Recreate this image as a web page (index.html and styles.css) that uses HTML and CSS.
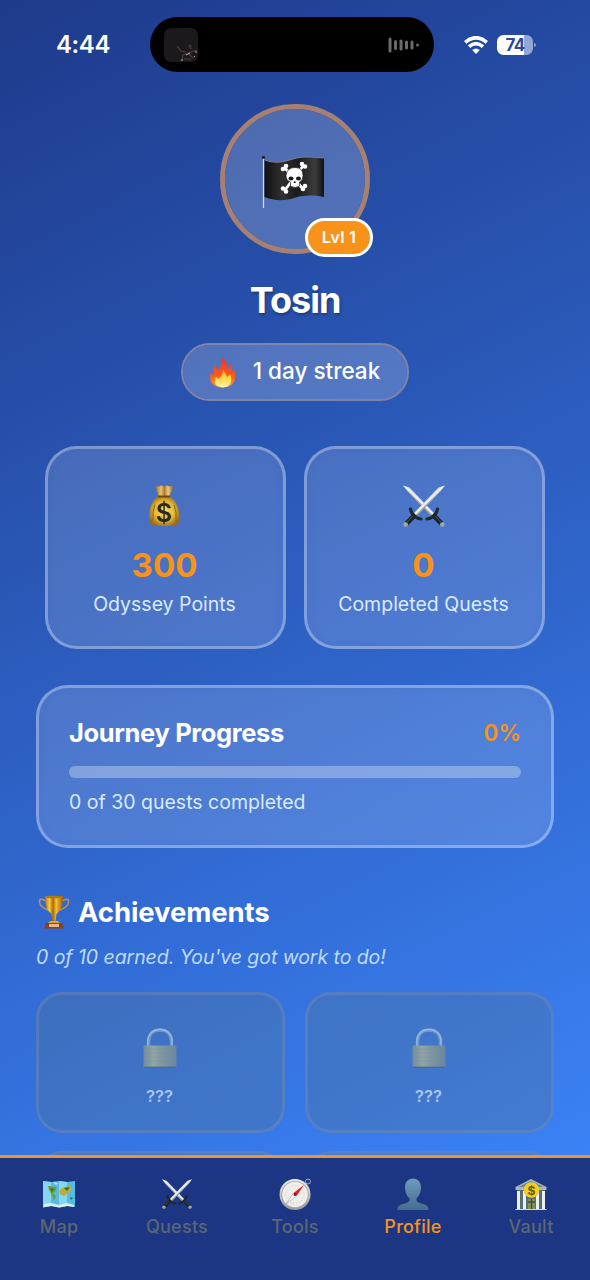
FILE: index.html
```html
<!DOCTYPE html>
<html lang="en">
<head>
<meta charset="utf-8">
<title>Profile</title>
<link rel="stylesheet" href="styles.css">
</head>
<body>
<svg class="defs" aria-hidden="true">
  <defs>
    <linearGradient id="bladeL" x1="0" y1="1" x2="1" y2="0"><stop offset=".46" stop-color="#8d949c"/><stop offset=".5" stop-color="#fff"/><stop offset=".56" stop-color="#cfd6dc"/></linearGradient>
    <linearGradient id="gold" x1="0" x2="1"><stop offset="0" stop-color="#b87512"/><stop offset=".25" stop-color="#f5c93c"/><stop offset=".45" stop-color="#a8690c"/><stop offset=".62" stop-color="#f3c035"/><stop offset="1" stop-color="#a35d08"/></linearGradient>
    <linearGradient id="sack" x1="0" x2="1"><stop offset="0" stop-color="#9c6c26"/><stop offset=".3" stop-color="#e8c070"/><stop offset=".5" stop-color="#b07a35"/><stop offset=".7" stop-color="#efcb80"/><stop offset="1" stop-color="#936022"/></linearGradient>
    <radialGradient id="bag" cx=".5" cy=".5" r=".55"><stop offset="0" stop-color="#ffe263"/><stop offset=".6" stop-color="#e5b634"/><stop offset="1" stop-color="#96691a"/></radialGradient>
    <linearGradient id="cloth" x1="0" x2="1"><stop offset="0" stop-color="#111"/><stop offset=".3" stop-color="#303030"/><stop offset=".55" stop-color="#1b1b1b"/><stop offset=".85" stop-color="#3c3c3c"/><stop offset="1" stop-color="#111"/></linearGradient>
    <linearGradient id="flame" x1="0" y1="0" x2="0" y2="1"><stop offset="0" stop-color="#e8352a"/><stop offset=".6" stop-color="#fa5a1e"/><stop offset="1" stop-color="#ff9d22"/></linearGradient>
    <linearGradient id="core" x1="0" y1="0" x2="0" y2="1"><stop offset="0" stop-color="#ff9b28"/><stop offset=".45" stop-color="#ffd23c"/><stop offset="1" stop-color="#fff6ae"/></linearGradient>
    <linearGradient id="lockBody" x1="0" x2="1"><stop offset="0" stop-color="#718d9d"/><stop offset=".3" stop-color="#91a5a6"/><stop offset=".5" stop-color="#829aa1"/><stop offset=".75" stop-color="#7690a0"/><stop offset="1" stop-color="#6886a6"/></linearGradient>
    <linearGradient id="person" x1="0" y1="0" x2="0" y2="1"><stop offset="0" stop-color="#6d9bbb"/><stop offset="1" stop-color="#456d90"/></linearGradient>
    <linearGradient id="rim" x1="0" y1="0" x2="0" y2="1"><stop offset="0" stop-color="#eee"/><stop offset="1" stop-color="#999"/></linearGradient>
    <symbol id="swords" viewBox="0 0 42 42">
      <g id="sword">
        <path d="M0 .5 6.500 2.500 31 28 28 31 4.500 6.500Z" fill="url(#bladeL)"/>
        <path d="M0 .5 29.500 29.500 28 31 4.500 6.500Z" fill="#868f97" opacity=".55"/>
        <path d="M24 34Q27 34 30.500 31T34.500 24" fill="none" stroke="#1d2b2e" stroke-width="3.200" stroke-linecap="round"/>
        <path d="M30 30 38.500 38.500" stroke="#1d2628" stroke-width="4.800"/>
        <path d="M32 31 38 37" stroke="#56605e" stroke-width=".8"/>
        <circle cx="39.300" cy="39.500" r="2.300" fill="#a3aa9e"/>
      </g>
      <use href="#sword" transform="matrix(-1 0 0 1 42 0)"/>
    </symbol>
    <symbol id="lock" viewBox="0 0 34 41">
      <path d="M5.500 20V13.500C5.500 6 10 2 17 2S28.500 6 28.500 13.500V20" fill="none" stroke="#6f96ca" stroke-width="3.500"/>
      <path d="M4.800 20V13.500C4.800 6 10 1.500 17 1.500S29 6 29 13.500V20" fill="none" stroke="#9ab9dc" stroke-width="1.300"/>
      <rect x=".5" y="17.500" width="33" height="22.500" rx="1" fill="url(#lockBody)"/>
      <path d="M1 21H33M1 25H33M1 29H33M1 33H33" stroke="#7394a0" stroke-width=".6" opacity=".5"/>
      <path d="M1 39.300H33" stroke="#4b6780" stroke-width="1.200"/>
    </symbol>
  </defs>
</svg>
<div class="phone">
  <main class="screen">
    <header class="status">
      <span class="status-time">4:44</span>
      <div class="island">
        <svg class="album" viewBox="0 0 34 34"><rect width="34" height="34" rx="7" fill="#1b191b"/><path d="M13 18 17 23 22 24M26 18 27 21M18 33 19 27 24 25 33 22M24 25 29 30M20 31H27" fill="none" stroke="#4d403d" stroke-width="1.200"/><path d="m22 27 4-2M18 31v2M30 29l1-1M32 23v2" stroke="#c4b0a7" stroke-width="1"/><circle cx="26" cy="18" r="1.700" fill="#3e3434"/></svg>
        <svg class="wave" viewBox="0 0 32 16"><g stroke="#6b6b6d" stroke-width="3" stroke-linecap="round"><path d="M2 2V14M7.500 4.500V11.500M13 4V12M18.500 5V11M24 5V11M29.500 8V8.010"/></g></svg>
      </div>
      <div class="status-right">
        <svg class="wifi" viewBox="0 0 24 18"><g fill="none" stroke="#fff" stroke-width="3.700"><path d="M1.200 6.300Q12-2.800 22.800 6.300"/><path d="M5 10.700Q12 4.700 19 10.700"/></g><path d="M8.200 14Q12 10.800 15.800 14L12 17.900Z" fill="#fff"/></svg>
        <div class="battery"><span class="battery-level">74</span></div>
        <svg class="battery-tip" viewBox="0 0 3 6"><path d="M0 0Q3 1 3 3T0 6Z" fill="#8fa4d2"/></svg>
      </div>
    </header>

    <section class="profile">
      <div class="avatar">
        <svg class="flag" viewBox="0 0 64 54">
          <path d="M2.500 1V53" stroke="#d6dbe2" stroke-width="1.300"/><circle cx="2.500" cy="2.300" r="1.600" fill="#1c1c26"/>
          <path d="M3.500 5C15 9 22 7 32 4S50 2 63 3V42C52 40 43 40 33 43S14 46 3.500 42Z" fill="url(#cloth)"/>
          <path d="M3.500 5C15 9 22 7 32 4S50 2 63 3" fill="none" stroke="#80838c" stroke-width=".9"/>
          <g stroke="#fff" stroke-width="2.800" stroke-linecap="round"><path d="M24 13 42 34M42 11 24 35"/></g>
          <g fill="#fff"><circle cx="22" cy="14" r="2.300"/><circle cx="25" cy="11" r="2.300"/><circle cx="41" cy="9" r="2.300"/><circle cx="44" cy="11.500" r="2.300"/><circle cx="22" cy="33.500" r="2.300"/><circle cx="25" cy="36.500" r="2.300"/><circle cx="44" cy="31" r="2.300"/><circle cx="42" cy="34" r="2.300"/></g>
          <path d="M25 20.500Q26 12.500 34 12.500T42 20.500Q42 25.500 38.500 27V31Q34 34 29.500 31V27Q25 25.500 25 20.500Z" fill="#fff" stroke="#252525" stroke-width=".7"/>
          <ellipse cx="30" cy="23.500" rx="2.500" ry="2.100" fill="#191919"/><ellipse cx="37.500" cy="23.500" rx="2.500" ry="2.100" fill="#191919"/><path d="m32.500 28 1.300-2.500L35 28Z" fill="#222"/>
        </svg>
        <span class="level">Lvl 1</span>
      </div>
      <h1 class="name">Tosin</h1>
      <div class="streak">
        <svg class="fire" viewBox="0 0 26 31"><path d="M11.500 0C17 5 18 9 17.500 13 20 11 20 8 20 6.500 22 9 22 12 22.500 15L24.500 13C26 21 26 30 13 30.500 0 30-1 22 .8 15.500L4 19C3 14 3 11 5 7.500 6 10 6 11 8 12.500 12 9 12 4 11.500 0Z" fill="url(#flame)"/><path d="M13 12C15 16 16 17 17.500 20L20 17C23 24 21 30 13 30.500 5 30 3 25 6 19.500L8.500 22C12 19 13 16 13 12Z" fill="url(#core)"/></svg>
        <span>1 day streak</span>
      </div>
    </section>

    <section class="stats">
      <div class="card stat">
        <svg class="stat-icon" viewBox="0 0 42 42"><path d="M11.500 1Q15 2 17 .5 20 2 23 .5 26 2 29.500 1L25.500 11H14.500Z" fill="url(#sack)"/><path d="M14.500 11H25.500Q35.500 18 35.500 33 35.500 41 28 41H12.500Q5 41 5 34 4.500 18 14.500 11Z" fill="url(#bag)"/><path d="M14 11.500H26" stroke="#754914" stroke-width="2"/><path d="M11 20Q8 27 9 36M30 20Q33 28 32 37" fill="none" stroke="#93691b" stroke-width="1"/><text class="bag-sign" x="20" y="36.500">$</text></svg>
        <strong class="stat-value">300</strong>
        <span class="stat-label">Odyssey Points</span>
      </div>
      <div class="card stat">
        <svg class="stat-icon"><use href="#swords"/></svg>
        <strong class="stat-value">0</strong>
        <span class="stat-label">Completed Quests</span>
      </div>
    </section>

    <section class="card progress">
      <div class="progress-head"><h2 class="progress-title">Journey Progress</h2><span class="percent">0%</span></div>
      <div class="track"></div>
      <p class="progress-note">0 of 30 quests completed</p>
    </section>

    <section class="achievements">
      <div class="section-title">
        <svg class="trophy" viewBox="0 0 34 34"><g fill="none" stroke="#c3924b" stroke-width="1.500"><path d="M9 6Q2 2 2.500 7 3 12 11 15M25 6Q32 2 31.500 7 31 12 23 15"/></g><path d="M8 1.500H26Q26 15 19.500 19L18.500 26H15.500L14.500 19Q8 15 8 1.500Z" fill="url(#gold)"/><ellipse cx="17" cy="2" rx="9" ry="1.300" fill="#b37a14"/><path d="M13 26H21L23 28H11Z" fill="#e4a624"/><path d="M9 28H25L27 33.500H7Z" fill="#8d3f19"/><rect x="12" y="29" width="10" height="3" fill="#e7b886"/></svg>
        <h2 class="title-text">Achievements</h2>
      </div>
      <p class="earned">0 of 10 earned. You've got work to do!</p>
      <div class="badges">
        <div class="badge"><svg class="lock"><use href="#lock"/></svg><span>???</span></div>
        <div class="badge"><svg class="lock"><use href="#lock"/></svg><span>???</span></div>
        <div class="badge"></div>
        <div class="badge"></div>
      </div>
    </section>
  </main>

  <nav class="tabs">
    <a class="tab"><svg class="tab-icon" viewBox="0 0 34 34"><path d="M1 4 9 5 17 4 25 5 33 4V30L25 29 17 30.500 9 29 1 30.500Z" fill="#55bde5"/><path d="M1 4 9 5V29L1 30.500ZM17 4 25 5V29L17 30.500Z" fill="#87d6ef"/><path d="M2 27 9 26 17 28 25 26 32 28V30L25 29 17 30.500 9 29 1.500 30Z" fill="#d9eff1"/><path d="M6 9 15 10 13 15 11 16 14 19 12 24 10 18 7 13Z" fill="#6f9c35"/><path d="M18 13 22 10 30 9 29 13 25 17 23 18 22 19 19 18 17 15Z" fill="#c1ac32"/><path d="M8 11 12 12 10 15M22 11 28 10 25 14M28 20 31 21 29 23Z" fill="#326d38"/><path d="M11 5 16 6 14 8Z" fill="#e2d9df"/></svg><span>Map</span></a>
    <a class="tab"><svg class="tab-icon swords-small"><use href="#swords"/></svg><span>Quests</span></a>
    <a class="tab"><svg class="tab-icon" viewBox="0 0 34 34"><circle cx="30" cy="4.500" r="2.500" fill="none" stroke="#9aa9c8" stroke-width="1"/><circle cx="17" cy="17.500" r="15.500" fill="url(#rim)"/><circle cx="17" cy="17.500" r="13.600" fill="#a5a4a4"/><circle cx="17" cy="17.500" r="12.800" fill="#f0eeeb"/><circle cx="17" cy="17.500" r="9" fill="none" stroke="#cbc8c5" stroke-width="1" stroke-dasharray="1 2"/><path d="M26 8 18.500 19 15.500 16Z" fill="#df2029"/><path d="M8 27 15.500 16 18.500 19Z" fill="#fff" stroke="#999" stroke-width=".6"/><circle cx="17" cy="17.500" r="1.500" fill="#851a20"/></svg><span>Tools</span></a>
    <a class="tab active"><svg class="tab-icon" viewBox="0 0 34 34"><path d="M17 1.500C22 1.500 25 5 25 10.500 25 15.500 23 19 20.500 21.500 20 25 22 25.500 27 27 31 28 32.500 29.500 32.500 33H1.500C1.500 29.500 3 28 7 27 12 25.500 14 25 13.500 21.500 11 19 9 15.500 9 10.500 9 5 12 1.500 17 1.500Z" fill="url(#person)"/></svg><span>Profile</span></a>
    <a class="tab"><svg class="tab-icon" viewBox="0 0 34 34"><path d="M3 11H31V33H3Z" fill="#587073"/><path d="M1.500 10 17 2 32.500 10V13H1.500Z" fill="#a9b5b8"/><path d="M4 10 17 4 30 10Z" fill="#71858a"/><g fill="#edf1ed"><path d="M3 14H6V32H3ZM9 14H12V32H9ZM22 14H25V32H22ZM28 14H31V32H28Z"/></g><path d="M14 22H21V32H14Z" fill="#879251"/><path d="M17.500 22V32M14 25H21" stroke="#385046" stroke-width="1.300"/><path d="M1.500 32.500H32.500" stroke="#cdd6d1" stroke-width="1"/><circle cx="17.500" cy="13" r="7.800" fill="#f2cd22"/><text class="bank-sign" x="17.500" y="17.500">$</text></svg><span>Vault</span></a>
  </nav>
</div>
</body>
</html>
```
FILE: styles.css
```css
* { box-sizing: border-box; }
body { margin: 0; font-family: Inter, "Liberation Sans", sans-serif; color: #fff; }
h1, h2, p { margin: 0; }
svg { display: block; flex: none; }
.defs { position: absolute; width: 0; height: 0; }
.phone { display: flex; flex-direction: column; width: 590px; height: 1280px; overflow: hidden; background: #1c3684; }
.screen { flex: 1; min-height: 0; overflow: hidden; background: linear-gradient(153deg, #1e3a8a 0%, #3b82f6 100%); }

.status { display: grid; grid-template-columns: 150px 284px 1fr; align-items: center; height: 90px; padding: 17px 0 18px; }
.status-time { padding-left: 56px; font-size: 24px; font-weight: 600; line-height: 55px; letter-spacing: -.4px; }
.island { display: flex; align-items: center; justify-content: space-between; height: 55px; padding: 0 14px; border-radius: 28px; background: #000; }
.album { width: 34px; height: 34px; }
.wave { width: 32px; height: 16px; }
.status-right { display: flex; align-items: center; padding-left: 30px; }
.wifi { width: 24px; height: 18px; }
.battery { width: 36px; height: 20px; margin-left: 9px; border-radius: 6.500px; background: linear-gradient(90deg, #fff 75%, #93a6d4 75%); }
.battery-level { display: block; text-align: center; font-size: 17px; font-weight: 700; line-height: 20px; letter-spacing: -.8px; color: #2849a0; }
.battery-tip { width: 2px; height: 6px; margin-left: 1px; }

.profile { display: flex; flex-direction: column; align-items: center; padding-top: 14px; }
.avatar { position: relative; display: flex; align-items: center; justify-content: center; width: 150px; height: 150px; border: 5px solid #a68073; border-radius: 50%; background: rgba(255, 255, 255, .2); background-clip: padding-box; }
.flag { width: 64px; height: 54px; margin-top: 6px; margin-right: 4px; }
.level { position: absolute; right: -8px; bottom: -8px; width: 68px; height: 39px; border: 3px solid #fff; border-radius: 20px; background: #f7931a; text-align: center; font-size: 16.500px; font-weight: 600; line-height: 33px; letter-spacing: .2px; }
.name { margin-top: 24px; font-size: 36px; font-weight: 700; line-height: 44px; letter-spacing: -1px; text-shadow: 1px 2px 3px rgba(0, 0, 0, .3); }
.streak { display: flex; align-items: center; justify-content: center; gap: 17px; width: 228px; height: 58px; margin-top: 21px; border: 2px solid #8084aa; border-radius: 29px; background: rgba(255, 255, 255, .2); background-clip: padding-box; font-size: 22.500px; font-weight: 500; line-height: 28px; }
.streak span { padding-bottom: 2px; }
.fire { width: 26px; height: 31px; }

.card { border: 3px solid rgba(255, 255, 255, .3); border-radius: 32px; background: rgba(255, 255, 255, .15); box-shadow: inset 0 0 8px rgba(30, 70, 170, .07); }
.stats { display: grid; grid-template-columns: 1fr 1fr; gap: 18px; margin: 45px 45px 0; }
.stat { display: flex; flex-direction: column; align-items: center; height: 203px; padding: 36px 2px 0 0; }
.stat-icon { width: 42px; height: 42px; }
.stat-value { margin-top: 18px; font-size: 33px; font-weight: 700; line-height: 40px; color: #f7931a; }
.stat-label { margin-top: 6px; font-size: 19.500px; line-height: 26px; color: #dbeafe; }
.bag-sign { font: 600 25px Inter, sans-serif; text-anchor: middle; fill: #30281d; }

.progress { height: 163px; margin: 36px 36px 0; padding: 28px 30px 0; }
.progress-head { display: flex; align-items: center; justify-content: space-between; height: 32px; }
.progress-title { font-size: 25.500px; font-weight: 700; letter-spacing: -.35px; }
.percent { font-size: 22.500px; font-weight: 600; }
.percent { color: #f7931a; }
.track { height: 12px; margin-top: 18px; border-radius: 6px; background: rgba(255, 255, 255, .3); }
.progress-note { margin-top: 11px; font-size: 19.500px; line-height: 26px; color: #dbeafe; }

.achievements { padding: 46px 36px 0; }
.section-title { display: flex; align-items: center; gap: 8px; height: 36px; }
.trophy { width: 34px; height: 34px; margin-left: 1px; margin-right: -1px; }
.title-text { font-size: 27.500px; font-weight: 700; letter-spacing: -.1px; }
.earned { margin-top: 14px; font-size: 19.500px; font-style: italic; line-height: 26px; letter-spacing: -.06px; color: #bfdbfe; }
.badges { display: grid; grid-template-columns: 1fr 1fr; gap: 18px 20px; margin-top: 22px; }
.badge { display: flex; flex-direction: column; align-items: center; height: 141px; padding: 33px 2px 0 0; border: 3px solid rgba(140, 150, 180, .3); border-radius: 26px; background: rgba(80, 115, 155, .38); font-size: 16.500px; font-weight: 600; color: #a9c5ef; }
.badge span { margin-top: 15px; line-height: 24px; }
.lock { width: 34px; height: 41px; }

.tabs { display: grid; grid-template-columns: repeat(5, 1fr); height: 125px; padding-top: 19px; border-top: 3px solid #eb9535; background: #1c3684; }
.tab { display: flex; flex-direction: column; align-items: center; font-size: 18px; font-weight: 500; line-height: 24px; letter-spacing: .25px; color: #5d6671; }
.tab-icon { width: 34px; height: 34px; margin-bottom: 4px; }
.swords-small { width: 30px; height: 30px; margin: 2px 0 6px; }
.active { color: #f7931a; }
.bank-sign { font: 700 12px Inter, sans-serif; text-anchor: middle; fill: #685d17; }
```
